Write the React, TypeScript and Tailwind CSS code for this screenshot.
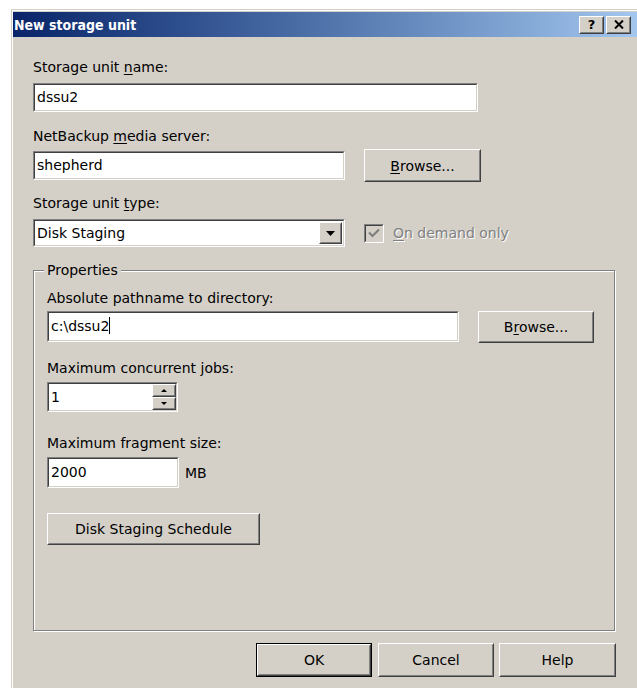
import React from "react";

type Box = { className?: string; children?: React.ReactNode };

// Classic 3D sunken edit field: gray/white outer edge, dark/face inner edge.
function Sunken({ className = "", children, inner = "bg-white" }: Box & { inner?: string }) {
  return (
    <div className={`border border-t-[#808080] border-l-[#808080] border-b-white border-r-white ${className}`}>
      <div className={`h-full w-full border border-t-[#404040] border-l-[#404040] border-b-[#d4d0c8] border-r-[#d4d0c8] ${inner}`}>
        {children}
      </div>
    </div>
  );
}

// Classic 3D raised button face.
function Raised({ className = "", children }: Box) {
  return (
    <div className={`border border-t-white border-l-white border-b-[#404040] border-r-[#404040] bg-[#d4d0c8] ${className}`}>
      <div className="h-full w-full border border-t-[#d4d0c8] border-l-[#d4d0c8] border-b-[#808080] border-r-[#808080] flex items-center justify-center">
        {children}
      </div>
    </div>
  );
}

function U({ children }: Box) {
  return <span className="underline decoration-1 underline-offset-[2px]">{children}</span>;
}

function DownArrow() {
  return (
    <svg width="9" height="5" viewBox="0 0 9 5">
      <path d="M0 0h9L4.5 5z" fill="#000" />
    </svg>
  );
}

export default function App() {
  return (
    <div className="w-[637px] h-[688px] overflow-hidden bg-white text-[14px] leading-[16px] text-black font-['DejaVu_Sans',sans-serif]">
      <div className="ml-[11px] mt-[9px] w-[640px] h-[700px] border border-t-[#d4d0c8] border-l-[#d4d0c8] border-r-[#404040] border-b-[#404040]">
        <div className="h-full border border-t-white border-l-white border-r-[#808080] border-b-[#808080] bg-[#d4d0c8] pt-[1px]">
          {/* caption bar */}
          <div className="h-[25px] flex items-center bg-linear-to-r from-[#0a246a] to-[#a6caf0] pl-[1px]">
            <span className="text-white font-bold text-[14px] leading-[16px] font-['DejaVu_Sans_Condensed','DejaVu_Sans',sans-serif]">
              New storage unit
            </span>
            <div className="ml-auto mr-[18px] flex gap-[2px]">
              <Raised className="w-[25px] h-[18px]">
                <span className="font-bold text-[13px] leading-[13px]">?</span>
              </Raised>
              <Raised className="w-[25px] h-[18px]">
                <svg width="10" height="9" viewBox="0 0 10 9">
                  <path d="M1 0.5l8 8M9 0.5l-8 8" stroke="#000" strokeWidth="2" />
                </svg>
              </Raised>
            </div>
          </div>

          {/* dialog body */}
          <div className="pl-[20px]">
            <div className="mt-[22px] h-[16px]">
              Storage unit <U>n</U>ame:
            </div>
            <Sunken className="mt-[8px] w-[445px] h-[29px]">
              <div className="h-full flex items-center pl-[2px] pb-[2px]">dssu2</div>
            </Sunken>

            <div className="mt-[16px] h-[16px]">
              NetBackup <U>m</U>edia server:
            </div>
            <div className="mt-[5px] flex items-start">
              <Sunken className="mt-[2px] w-[312px] h-[29px]">
                <div className="h-full flex items-center pl-[2px] pb-[2px]">shepherd</div>
              </Sunken>
              <Raised className="ml-[19px] w-[117px] h-[33px]">
                <span>
                  <U>B</U>rowse...
                </span>
              </Raised>
            </div>

            <div className="mt-[13px] h-[16px]">
              Storage unit <U>t</U>ype:
            </div>
            <div className="mt-[8px] flex items-center">
              <Sunken className="w-[312px] h-[28px]">
                <div className="h-full flex items-stretch">
                  <div className="flex-1 flex items-center pl-[2px] pb-[1px]">Disk Staging</div>
                  <Raised className="w-[23px] my-[1px] mr-[1px]">
                    <DownArrow />
                  </Raised>
                </div>
              </Sunken>
              <Sunken className="ml-[19px] w-[20px] h-[19px]" inner="bg-[#d4d0c8]">
                <div className="h-full flex items-center justify-center">
                  <svg width="12" height="10" viewBox="0 0 12 10">
                    <path d="M1 4.5l3.5 3.5L11 1.5" stroke="#808080" strokeWidth="2.2" fill="none" />
                  </svg>
                </div>
              </Sunken>
              <span className="ml-[9px] text-[#808080] [text-shadow:1px_1px_0_#ffffff]">
                <U>O</U>n demand only
              </span>
            </div>

            {/* Properties group */}
            <fieldset className="mt-[15px] w-[582px] h-[369px] border border-[#808080] shadow-[inset_1px_1px_0_#ffffff,1px_1px_0_#ffffff] pl-[13px]">
              <legend className="-ml-[3px] px-[3px] bg-[#d4d0c8] h-[16px]">Properties</legend>

              <div className="mt-[12px] h-[16px]">Absolute pathname to directory:</div>
              <div className="mt-[5px] flex items-start">
                <Sunken className="w-[412px] h-[31px]">
                  <div className="h-full flex items-center pl-[2px] pb-[2px]">
                    c:\dssu2
                    <span className="inline-block w-[1px] h-[17px] bg-black" />
                  </div>
                </Sunken>
                <Raised className="ml-[19px] w-[116px] h-[32px]">
                  <span>
                    B<U>r</U>owse...
                  </span>
                </Raised>
              </div>

              <div className="mt-[17px] h-[16px]">Maximum concurrent jobs:</div>
              <Sunken className="mt-[6px] w-[131px] h-[30px]">
                <div className="h-full flex items-stretch">
                  <div className="flex-1 flex items-center pl-[2px] pb-[1px]">1</div>
                  <div className="w-[24px] flex flex-col">
                    <Raised className="flex-1">
                      <svg width="6" height="3" viewBox="0 0 6 3">
                        <path d="M0 3h6L3 0z" fill="#000" />
                      </svg>
                    </Raised>
                    <Raised className="flex-1">
                      <svg width="6" height="3" viewBox="0 0 6 3">
                        <path d="M0 0h6L3 3z" fill="#000" />
                      </svg>
                    </Raised>
                  </div>
                </div>
              </Sunken>

              <div className="mt-[23px] h-[16px]">Maximum fragment size:</div>
              <div className="mt-[6px] flex items-center">
                <Sunken className="w-[132px] h-[31px]">
                  <div className="h-full flex items-center pl-[2px] pb-[2px]">2000</div>
                </Sunken>
                <span className="ml-[6px]">MB</span>
              </div>

              <Raised className="mt-[25px] w-[213px] h-[32px]">
                <span>Disk Staging Schedule</span>
              </Raised>
            </fieldset>

            {/* dialog buttons */}
            <div className="mt-[12px] flex pl-[223px]">
              <div className="w-[116px] h-[34px] border border-black">
                <Raised className="h-full w-full">
                  <span>OK</span>
                </Raised>
              </div>
              <Raised className="ml-[6px] w-[116px] h-[34px]">
                <span>Cancel</span>
              </Raised>
              <Raised className="ml-[5px] w-[117px] h-[34px]">
                <span>Help</span>
              </Raised>
            </div>
          </div>
        </div>
      </div>
    </div>
  );
}
